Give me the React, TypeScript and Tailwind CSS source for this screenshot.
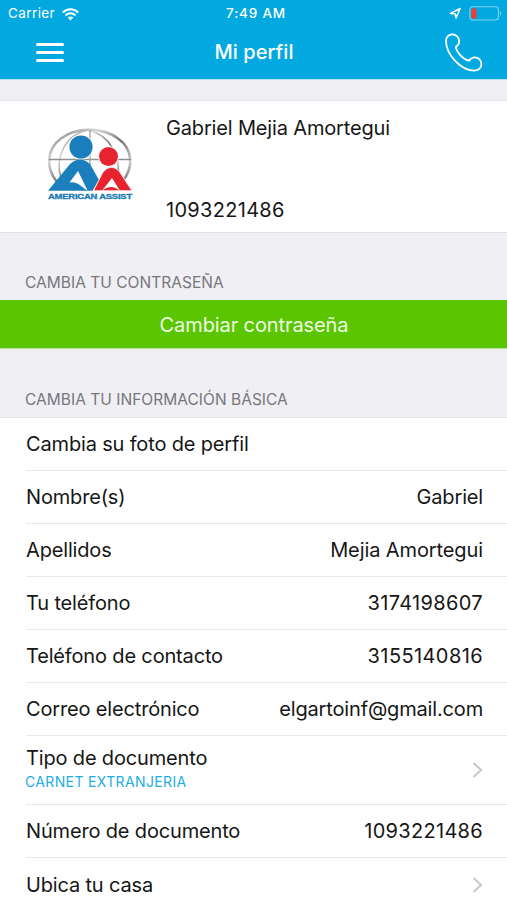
import React from "react"

type RowProps = {
  label: string
  value?: string
  rowClass?: string
  valueClass?: string
  chevron?: boolean
}

const rows: RowProps[] = [
  { label: "Cambia su foto de perfil" },
  { label: "Nombre(s)", value: "Gabriel" },
  { label: "Apellidos", value: "Mejia Amortegui", valueClass: "tracking-[-0.1px]" },
  { label: "Tu teléfono", value: "3174198607", valueClass: "tracking-[0.35px]" },
  { label: "Teléfono de contacto", value: "3155140816", valueClass: "tracking-[0.4px]" },
  { label: "Correo electrónico", value: "elgartoinf@gmail.com" },
]

const Chevron: React.FC = () => (
  <svg className="h-[18px] w-[11px]" viewBox="0 0 11 18" fill="none">
    <path d="M1.5 2 L9 9 L1.5 16" stroke="#c7c7cc" strokeWidth="2" />
  </svg>
)

const Row: React.FC<RowProps> = ({ label, value, rowClass = "", valueClass = "", chevron }) => (
  <div className={`ml-[26px] flex h-[53px] items-center justify-between border-b border-[#e9e9eb] pr-6 ${rowClass}`}>
    <span>{label}</span>
    {value && <span className={valueClass}>{value}</span>}
    {chevron && <Chevron />}
  </div>
)

const StatusBar: React.FC = () => (
  <div className="grid h-[27px] grid-cols-3 items-center pr-[5px] pl-[8px] text-[13.5px] leading-none">
    <div className="flex items-center gap-[7px] pt-px">
      <span className="tracking-[0.4px]">Carrier</span>
      <svg className="h-[13px] w-[17px]" viewBox="0 0 17 13" fill="none" stroke="#fff" strokeWidth="2.1">
        <path d="M0.8 4.6 C5 0.2 12 0.2 16.2 4.6" />
        <path d="M3.5 7.4 C6.3 4.6 10.7 4.6 13.5 7.4" />
        <path d="M8.5 12.4 L5.7 9.6 C7.2 8.1 9.8 8.1 11.3 9.6 Z" fill="#fff" stroke="none" />
      </svg>
    </div>
    <span className="pt-px pl-[2px] text-center font-medium tracking-[0.8px]">7:49 AM</span>
    <div className="flex items-center justify-end gap-[7px]">
      <svg className="h-[13px] w-[13px]" viewBox="0 0 13 13" fill="none">
        <path d="M1.4 6.4 L11.2 1.5 L7 11 L6.2 6.8 Z" stroke="#fff" strokeWidth="1.5" strokeLinejoin="round" />
      </svg>
      <svg className="h-[15px] w-[33px]" viewBox="0 0 33 15" fill="none">
        <rect x="0.8" y="0.8" width="28.6" height="13.2" rx="3" stroke="#7fd3f0" strokeWidth="1.1" />
        <rect x="2.4" y="2.4" width="5" height="10" rx="1" fill="#f23c32" />
        <path d="M31 5 C32.5 5.6 32.5 9.2 31 9.8 Z" fill="#7fd3f0" />
      </svg>
    </div>
  </div>
)

const Header: React.FC = () => (
  <header className="h-[79px] bg-[#02a9e1] text-white">
    <StatusBar />
    <div className="flex h-[50px] items-center justify-between pr-6 pl-9">
      <div className="flex w-[39px] flex-col gap-[5px] pr-[11px]">
        <span className="h-[3px] rounded-sm bg-white" />
        <span className="h-[3px] rounded-sm bg-white" />
        <span className="h-[3px] rounded-sm bg-white" />
      </div>
      <h1 className="pr-[11px] text-center text-[20px] font-medium tracking-[0.05px]">Mi perfil</h1>
      <svg className="h-[39px] w-[39px]" viewBox="0 0 39 39" fill="none">
        <path
          d="M2 8 C2 4 5 1.4 8.2 1.4 C12 1.4 15.2 4.5 15.2 8.2 C15.2 10.5 14 12.5 11.8 14 C12.5 19 19 26.5 25 27.7 C26.5 25.6 28.5 24.4 30.8 24.4 C34.5 24.4 37.4 27.4 37.4 31 C37.4 34.8 34.5 37.6 30 37.6 C17 37.6 2 21.5 2 8 Z"
          stroke="#fff"
          strokeWidth="1.8"
        />
      </svg>
    </div>
  </header>
)

const Logo: React.FC = () => (
  <svg className="h-[76px] w-[90px]" viewBox="0 0 90 76" fill="none">
    <defs>
      <linearGradient id="ring" x1="0" y1="0" x2="1" y2="1">
        <stop offset="0" stopColor="#777" />
        <stop offset="0.3" stopColor="#d8d8d8" />
        <stop offset="0.55" stopColor="#777" />
        <stop offset="0.8" stopColor="#ccc" />
        <stop offset="1" stopColor="#666" />
      </linearGradient>
    </defs>
    <g stroke="url(#ring)">
      <path d="M12 56 C0 41 2 23 16 12.5 C31 1 58 1 73 12.5 C88 23 89 42 77 56" strokeWidth="2.6" />
      <path d="M16 52 C10 33 19 9 43 4 C65 9 76 30 73 53" strokeWidth="1.6" />
    </g>
    <path d="M4 33.5 H86" stroke="#8f8f8f" strokeWidth="1.4" />
    <path d="M45 4 V58" stroke="#a8a8a8" strokeWidth="1.4" />
    <circle cx="36" cy="21" r="12.6" fill="#fff" />
    <circle cx="36" cy="21" r="11.6" fill="#1c7fbd" />
    <circle cx="63.5" cy="30.5" r="10.4" fill="#fff" />
    <circle cx="63.5" cy="30.5" r="9.5" fill="#e6232e" />
    <path d="M3 64.8 L25 38 Q35 29 45 38 L54 54 L47.5 64.8 Z" fill="#1c7fbd" />
    <path d="M33 45 L42.5 64.5 C38 62.5 33 55 24.5 56.5 Z" fill="#fff" />
    <path d="M48.5 64.8 L58 46 Q66 37 74 45 L87 64.8 Z" fill="#e6232e" stroke="#fff" strokeWidth="0.8" />
    <path d="M67 52 L75 64.8 C71 62 66 58 57 64.8 Z" fill="#fff" />
    <text x="3" y="73" textLength="84" lengthAdjust="spacingAndGlyphs" fill="#1878b4" stroke="#1878b4" strokeWidth="0.3" fontFamily="Liberation Sans" fontWeight="bold" fontSize="7.4">
      AMERICAN ASSIST
    </text>
  </svg>
)

const SectionTitle: React.FC<{ children: React.ReactNode }> = ({ children }) => (
  <h2 className="pl-[25px] text-[15.5px] leading-[18px] tracking-[0.03px] text-[#77777c]">{children}</h2>
)

const App: React.FC = () => (
  <div className="h-[900px] w-[507px] overflow-hidden bg-[#efeff4] font-['Inter',sans-serif] text-[20px] leading-6 tracking-[-0.16px] text-[#161616]">
    <Header />
    <div className="h-[22px] border-t border-b border-t-[#b5e6f7] border-b-[#e3e3e7]" />
    <section className="flex h-[132px] border-b border-[#e3e3e7] bg-white pl-[45px]">
      <div className="w-[121px] pt-[25px]">
        <Logo />
      </div>
      <div className="flex flex-col justify-between pt-[15px] pb-[10px]">
        <span>Gabriel Mejia Amortegui</span>
        <span className="tracking-[0.3px]">1093221486</span>
      </div>
    </section>
    <div className="h-[67px] pt-[41px]">
      <SectionTitle>CAMBIA TU CONTRASEÑA</SectionTitle>
    </div>
    <button className="block h-[49px] w-full border-b border-[#b9e29b] bg-[#5ac500] pt-px pl-px text-center tracking-[-0.1px] text-[#eefbe4]">
      Cambiar contraseña
    </button>
    <div className="h-[68px] pt-[42px]">
      <SectionTitle>CAMBIA TU INFORMACIÓN BÁSICA</SectionTitle>
    </div>
    <section className="border-t border-[#e3e3e7] bg-white">
      {rows.map((row) => (
        <Row key={row.label} {...row} />
      ))}
      <div className="ml-[26px] flex h-[69px] items-center justify-between border-b border-[#e9e9eb] pr-6">
        <div className="-ml-px flex flex-col">
          <span className="pl-px">Tipo de documento</span>
          <span className="text-[14px] tracking-[0.36px] text-[#1fade2]">CARNET EXTRANJERIA</span>
        </div>
        <Chevron />
      </div>
      <Row label="Número de documento" value="1093221486" valueClass="tracking-[0.3px]" />
      <Row label="Ubica tu casa" rowClass="pt-px" chevron />
    </section>
  </div>
)

export default App
